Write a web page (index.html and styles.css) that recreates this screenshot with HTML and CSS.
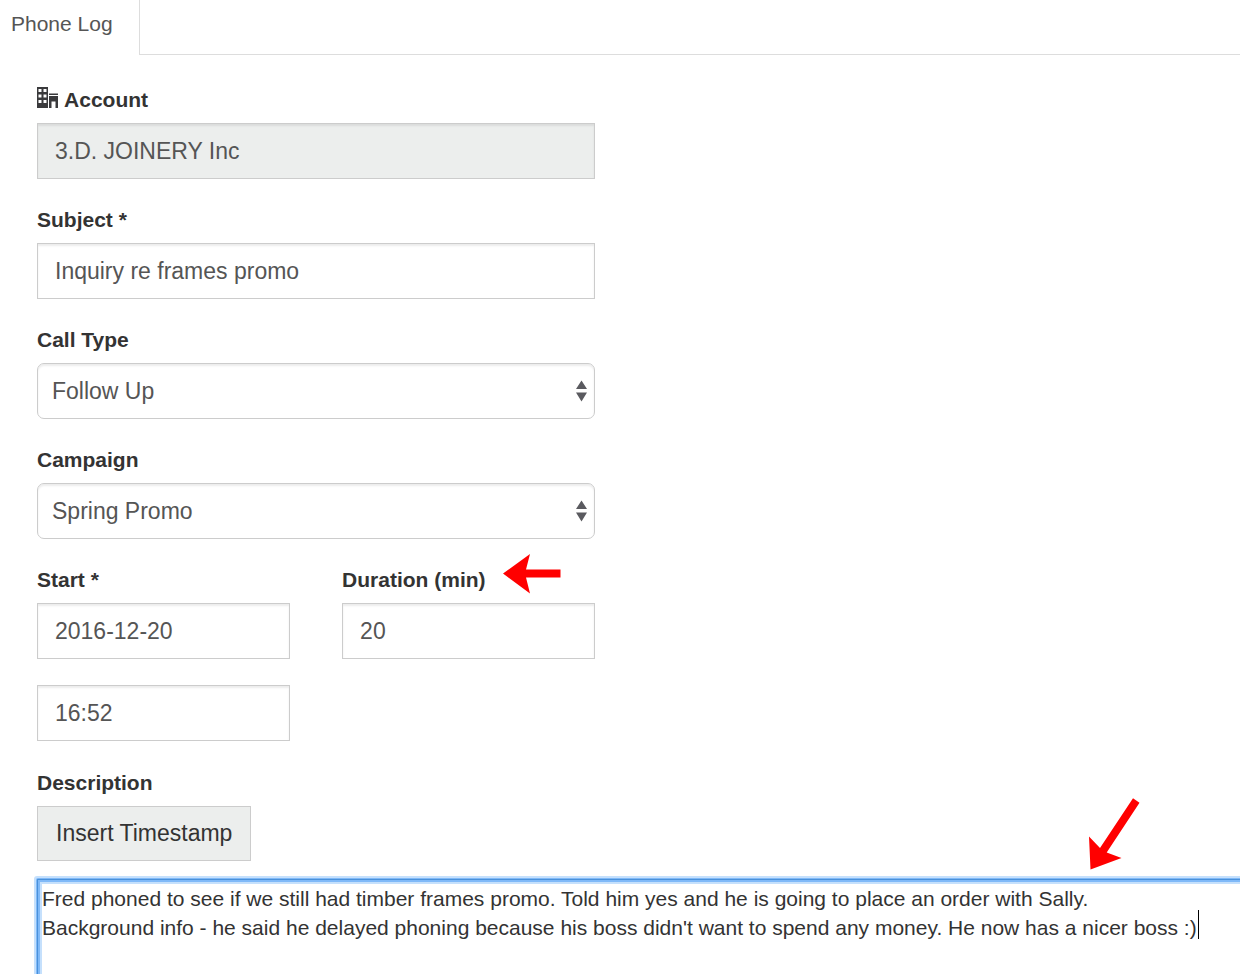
FILE: index.html
```html
<!DOCTYPE html>
<html lang="en">

<head>
    <meta charset="UTF-8">
    <meta name="viewport" content="width=device-width, initial-scale=1.0">
    <title>Phone Log</title>
    <link rel="stylesheet" href="styles.css">
</head>

<body>
    <nav class="tabs">
        <a href="#" class="tab">Phone Log</a>
        <div class="tab-rest"></div>
    </nav>

    <form class="log-form">
        <div class="fields">
            <div class="field">
                <label for="account">
                    <svg class="account-icon" viewBox="0 0 22 22" aria-hidden="true">
                        <path fill="#3a3a3c" fill-rule="evenodd" d="M0 0H11V21H0Z M1.5 2V5H4.5V2Z M6.5 2V5H9.5V2Z M1.5 7.5V10.5H4.5V7.5Z M6.5 7.5V10.5H9.5V7.5Z M1.5 13V16H4.5V13Z M6.5 13V16H9.5V13Z" />
                        <path fill="#3a3a3c" d="M12 6.5H21V8H12Z M12 9H21V21H18.5V14.5H14.5V21H12Z" />
                    </svg>
                    Account
                </label>
                <input type="text" id="account" class="input" value="3.D. JOINERY Inc" readonly>
            </div>

            <div class="field">
                <label for="subject">Subject *</label>
                <input type="text" id="subject" class="input" value="Inquiry re frames promo">
            </div>

            <div class="field">
                <label for="call-type">Call Type</label>
                <div class="select-box">
                    <select id="call-type" class="input">
                        <option>Follow Up</option>
                    </select>
                    <svg class="select-arrows" viewBox="0 0 11 22" aria-hidden="true">
                        <path fill="#5a5a5f" d="M5.5 0.5L11 9H0Z M0 12.5H11L5.5 21.5Z" />
                    </svg>
                </div>
            </div>

            <div class="field">
                <label for="campaign">Campaign</label>
                <div class="select-box">
                    <select id="campaign" class="input">
                        <option>Spring Promo</option>
                    </select>
                    <svg class="select-arrows" viewBox="0 0 11 22" aria-hidden="true">
                        <path fill="#5a5a5f" d="M5.5 0.5L11 9H0Z M0 12.5H11L5.5 21.5Z" />
                    </svg>
                </div>
            </div>

            <div class="field-row">
                <div class="field">
                    <label for="start-date">Start *</label>
                    <input type="text" id="start-date" class="input" value="2016-12-20">
                </div>
                <div class="field">
                    <label for="duration">Duration (min)</label>
                    <input type="text" id="duration" class="input" value="20">
                    <svg class="pointer pointer-duration" viewBox="0 0 58 40" aria-hidden="true">
                        <path fill="#f00" d="M0 19.5L27 0L23 15.5H57.5V23.5H23L27 39.5Z" />
                    </svg>
                </div>
                <input type="text" id="start-time" class="input" value="16:52" aria-label="Start time">
            </div>
        </div>

        <div class="description">
            <label for="description">Description</label>
            <button type="button" class="timestamp-btn">Insert Timestamp</button>
            <div class="notes-box">
                <textarea id="description" class="notes" spellcheck="false">Fred phoned to see if we still had timber frames promo. Told him yes and he is going to place an order with Sally.
Background info - he said he delayed phoning because his boss didn't want to spend any money. He now has a nicer boss :)</textarea>
                <span class="caret"></span>
                <svg class="pointer pointer-notes" viewBox="0 0 52 72" aria-hidden="true">
                    <path fill="#f00" d="M2.5 71.5L1 38.5L12 50L45 0.3L51.5 4.7L18.7 54.5L33.5 60Z" />
                </svg>
            </div>
        </div>
    </form>
</body>

</html>
```
FILE: styles.css
```css
* {
    box-sizing: border-box;
}

body {
    margin: 0;
    height: 100vh;
    background-color: #fff;
    color: #333;
    font-family: "Liberation Sans", Helvetica, Arial, sans-serif;
    font-size: 21px;
    line-height: 30px;
    overflow: hidden;
}

/* Tabs */
.tabs {
    display: flex;
}

.tab {
    padding: 9px 26px 16px 11px;
    border-right: 1px solid #ddd;
    color: #555;
    text-decoration: none;
}

.tab-rest {
    flex: 1;
    border-bottom: 1px solid #ddd;
}

/* Form */
.log-form {
    display: flex;
    flex-direction: column;
    height: calc(100vh - 55px);
    padding-top: 30px;
    overflow: hidden;
}

.fields {
    display: grid;
    gap: 26px;
    width: 48%;
    padding-left: 37px;
}

.field {
    position: relative;
}

.field-row {
    display: grid;
    grid-template-columns: 1fr 1fr;
    gap: 26px 52px;
}

label {
    display: block;
    margin-bottom: 8px;
    font-weight: bold;
}

.account-icon {
    width: 22px;
    height: 22px;
    vertical-align: -2px;
}

.input {
    display: block;
    width: 100%;
    height: 56px;
    padding: 0 17px;
    border: 1px solid #ccc;
    border-radius: 0;
    background-color: #fff;
    box-shadow: inset 0 2px 2px rgba(0, 0, 0, 0.075);
    color: #555;
    font-family: inherit;
    font-size: 23px;
    outline: none;
}

.input[readonly] {
    background-color: #eceeed;
}

.select-box {
    position: relative;
}

select.input {
    padding: 0 14px;
    border-radius: 7px;
    appearance: none;
}

.select-arrows {
    position: absolute;
    top: 17px;
    right: 8px;
    width: 11px;
    height: 22px;
    pointer-events: none;
}

/* Description */
.description {
    display: flex;
    flex: 1;
    flex-direction: column;
    align-items: flex-start;
    padding: 27px 0 0 37px;
}

.timestamp-btn {
    height: 55px;
    padding: 0 18px;
    border: 1px solid #ccc;
    background-color: #eceeed;
    color: #333;
    font-family: inherit;
    font-size: 23px;
}

.notes-box {
    display: flex;
    flex: 1;
    align-self: stretch;
    position: relative;
    margin-top: 18px;
}

/* The notes area is open towards the right and bottom edges */
.notes {
    flex: 1;
    padding: 4px;
    border: solid #4a90d9;
    border-width: 1px 0 0 1px;
    border-radius: 1px 0 0 0;
    box-shadow: 0 0 0 1px #7fb9f8, 0 0 0 3px #c5e0fc, inset 2px 2px 0 #7fb9f8, inset 4px 4px 0 #c5e0fc;
    color: #333;
    font-family: inherit;
    font-size: 21px;
    line-height: 29px;
    outline: none;
    overflow: hidden;
    resize: none;
}

.caret {
    position: absolute;
    top: 31px;
    left: 1161px;
    width: 1px;
    height: 29px;
    background-color: #000;
}

/* Red arrows */
.pointer {
    position: absolute;
    pointer-events: none;
}

.pointer-duration {
    top: -11px;
    left: 161px;
    width: 58px;
    height: 40px;
}

.pointer-notes {
    top: -81px;
    right: 100px;
    width: 52px;
    height: 72px;
}
```
